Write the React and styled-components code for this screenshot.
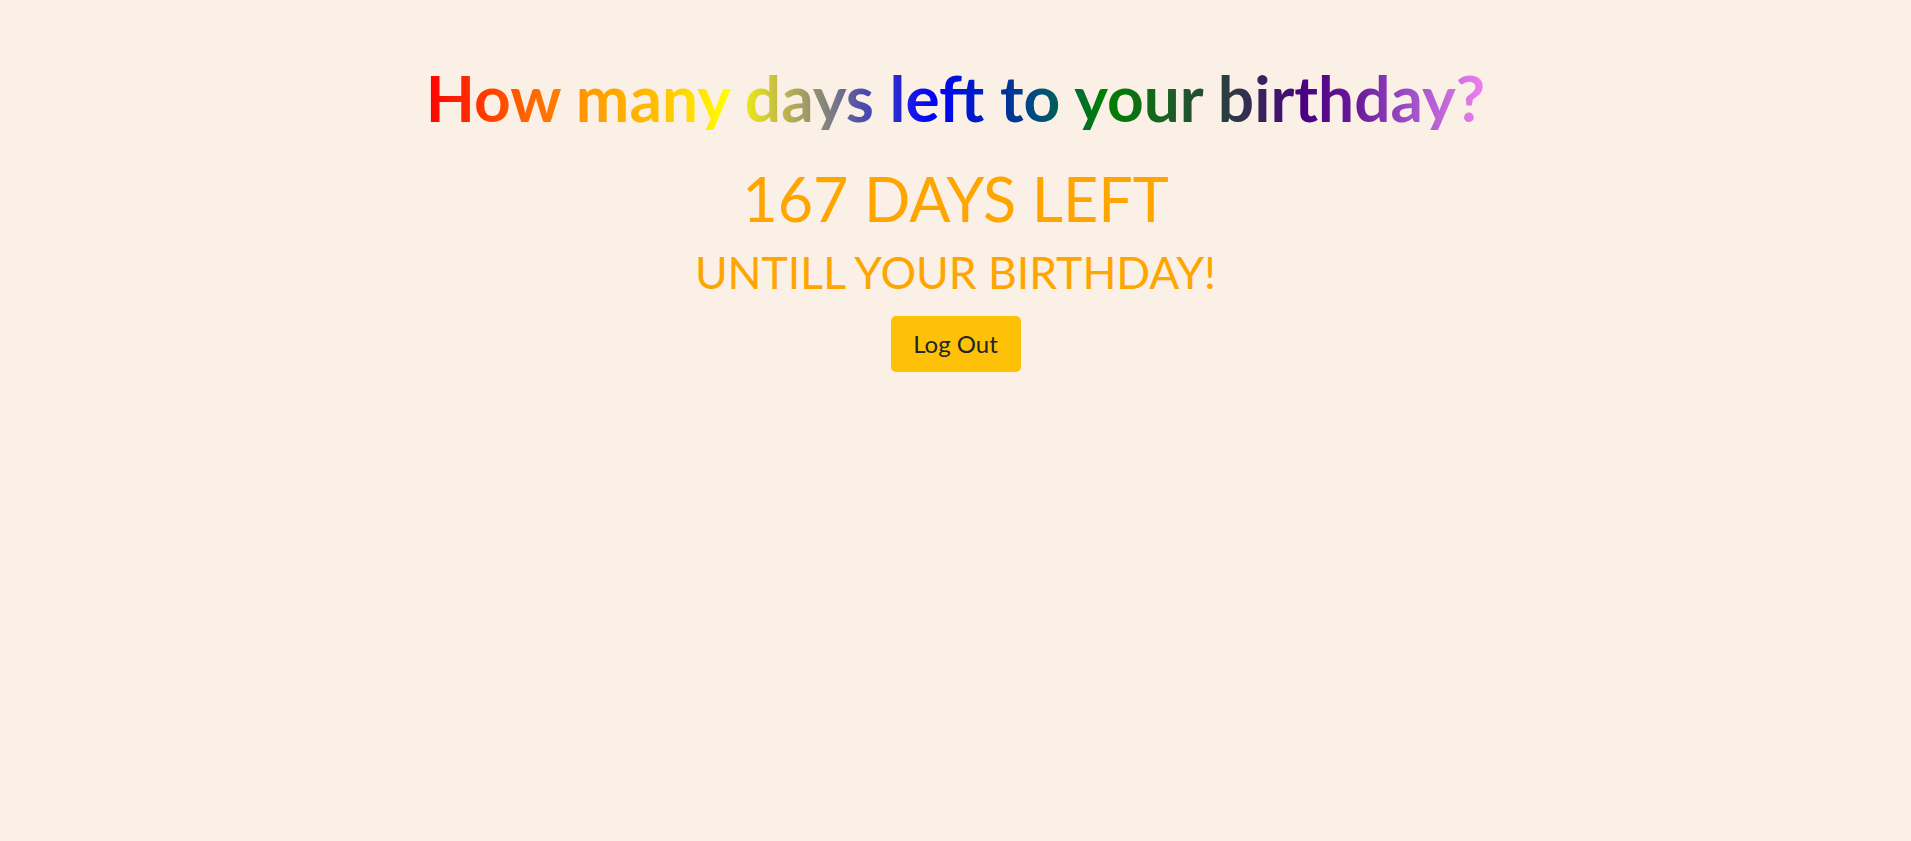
import React from 'react';
import styled, { createGlobalStyle } from 'styled-components';

const GlobalStyle = createGlobalStyle`
    html, body {
        margin: 0;
        padding: 0;
        background: #faf0e6;
        font-family: Lato, "Open Sans", sans-serif;
    }
`;

const Page = styled.div`
    min-height: 100vh;
    display: flex;
    flex-direction: column;
    align-items: center;
    padding-top: 66px;
    box-sizing: border-box;
`;

const Title = styled.h1`
    display: inline-block;
    margin: 0;
    font-size: 64px;
    line-height: 1;
    font-weight: 700;
    background: linear-gradient(
        to right,
        #ff0000 0%,
        #ff4a00 7%,
        #ff9800 15%,
        #ffc000 22%,
        #ffff00 28.5%,
        #c8c040 33%,
        #808080 38%,
        #5050a8 41%,
        #0000ff 48%,
        #003399 55%,
        #00507a 58%,
        #008000 64%,
        #1e5a2a 71%,
        #2c3a44 76%,
        #4b0082 83%,
        #6a1b9a 88%,
        #a050c8 93%,
        #ee82ee 100%
    );
    -webkit-background-clip: text;
    background-clip: text;
    color: transparent;
`;

const Count = styled.h2`
    margin: ${p => p.gap}px 0 0;
    font-size: ${p => p.size}px;
    line-height: 1;
    font-weight: 400;
    color: #ffa500;
    text-transform: uppercase;
`;

const Button = styled.button`
    margin-top: 21px;
    width: 130px;
    height: 56px;
    border: none;
    border-radius: 5px;
    background: #ffc107;
    color: #212529;
    font-family: inherit;
    font-size: 24px;
    cursor: pointer;
`;

const App = () => {
    const daysLeft = 167;
    return (
        <>
            <GlobalStyle />
            <Page>
                <Title>How many days left to your birthday?</Title>
                <Count size={61} gap={38}>{daysLeft} days left</Count>
                <Count size={44.5} gap={21}>untill your birthday!</Count>
                <Button>Log Out</Button>
            </Page>
        </>
    );
}

export default App;
